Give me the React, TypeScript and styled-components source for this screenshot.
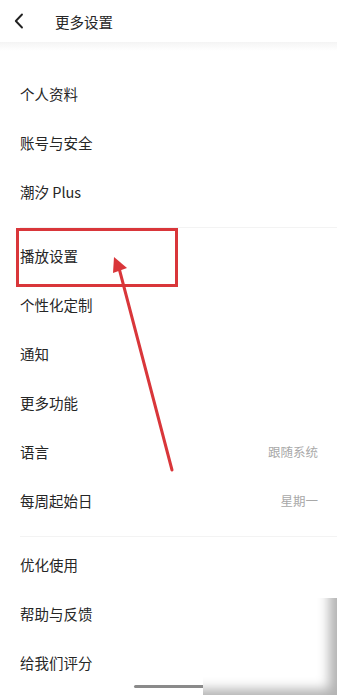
import React from 'react'
import styled, { createGlobalStyle } from 'styled-components'

const GlobalStyle = createGlobalStyle`
    html, body {
        margin: 0;
        padding: 0;
        background: #ffffff;
    }
    body {
        font-family: 'Noto Sans CJK SC', 'Noto Sans', sans-serif;
        color: #262626;
    }
`

const Page = styled.div`
    position: relative;
    width: 337px;
    height: 695px;
    overflow: hidden;
    background: #ffffff;
`

const Header = styled.header`
    display: flex;
    align-items: center;
    height: 42px;
    padding-left: 13px;
    position: relative;
    &::after {
        content: '';
        position: absolute;
        left: 0;
        right: 0;
        top: 42px;
        height: 9px;
        background: linear-gradient(#f4f4f4, #fbfbfb 60%, rgba(255, 255, 255, 0));
    }
`

const BackButton = styled.span`
    display: flex;
    width: 12px;
    height: 16px;
    margin-right: 30px;
`

const Title = styled.h1`
    margin: 0;
    font-size: 14.5px;
    font-weight: 400;
    color: #262626;
`

const List = styled.main`
    padding-top: 27px;
`

const Group = styled.section<{ $last?: boolean }>`
    margin: 0 0 0 20px;
    padding-bottom: ${(p) => (p.$last ? 0 : 11)}px;
    border-bottom: ${(p) => (p.$last ? 'none' : '1px solid #f3f3f3')};
    & + & {
        padding-top: 3px;
    }
`

const Row = styled.div`
    display: flex;
    align-items: center;
    justify-content: space-between;
    height: 49px;
    padding-right: 19px;
`

const Label = styled.span`
    font-size: 14.5px;
    color: #262626;
`

const Value = styled.span`
    font-size: 12.5px;
    color: #a8a8a8;
`

const Annotation = styled.svg`
    position: absolute;
    left: 0;
    top: 0;
    pointer-events: none;
`

const Shade = styled.div`
    position: absolute;
    right: 0;
    bottom: 0;
    width: 134px;
    height: 97px;
    background: #ffffff;
    border-top-left-radius: 4px;
    box-shadow: inset -14px -12px 12px -6px rgba(0, 0, 0, 0.3);
`

const HomeBar = styled.div`
    position: absolute;
    left: 134px;
    top: 685px;
    width: 90px;
    height: 3px;
    border-radius: 2px;
    background: #8a8a8a;
`

type Item = { label: string; value?: string }

const groups: Item[][] = [
    [{ label: '个人资料' }, { label: '账号与安全' }, { label: '潮汐 Plus' }],
    [
        { label: '播放设置' },
        { label: '个性化定制' },
        { label: '通知' },
        { label: '更多功能' },
        { label: '语言', value: '跟随系统' },
        { label: '每周起始日', value: '星期一' },
    ],
    [{ label: '优化使用' }, { label: '帮助与反馈' }, { label: '给我们评分' }],
]

const App = () => {
    return (
        <Page>
            <GlobalStyle />
            <Header>
                <BackButton>
                    <svg width="12" height="16" viewBox="0 0 12 16">
                        <path d="M9 1.5 L2.8 8 L9 14.5" fill="none" stroke="#222" strokeWidth="1.9" strokeLinecap="round" strokeLinejoin="round" />
                    </svg>
                </BackButton>
                <Title>更多设置</Title>
            </Header>
            <List>
                {groups.map((group, i) => (
                    <Group key={i} $last={i === groups.length - 1}>
                        {group.map((item) => (
                            <Row key={item.label}>
                                <Label>{item.label}</Label>
                                {item.value && <Value>{item.value}</Value>}
                            </Row>
                        ))}
                    </Group>
                ))}
            </List>
            <Annotation width="337" height="695" viewBox="0 0 337 695">
                <rect x="17.5" y="229.5" width="159" height="56" fill="none" stroke="#d9363a" strokeWidth="3" />
                <line x1="172" y1="470" x2="119" y2="268" stroke="#d9363a" strokeWidth="3" strokeLinecap="round" />
                <polygon points="114,257 127,268 113,273" fill="#d9363a" />
            </Annotation>
            <HomeBar />
            <Shade />
        </Page>
    )
}

export default App
